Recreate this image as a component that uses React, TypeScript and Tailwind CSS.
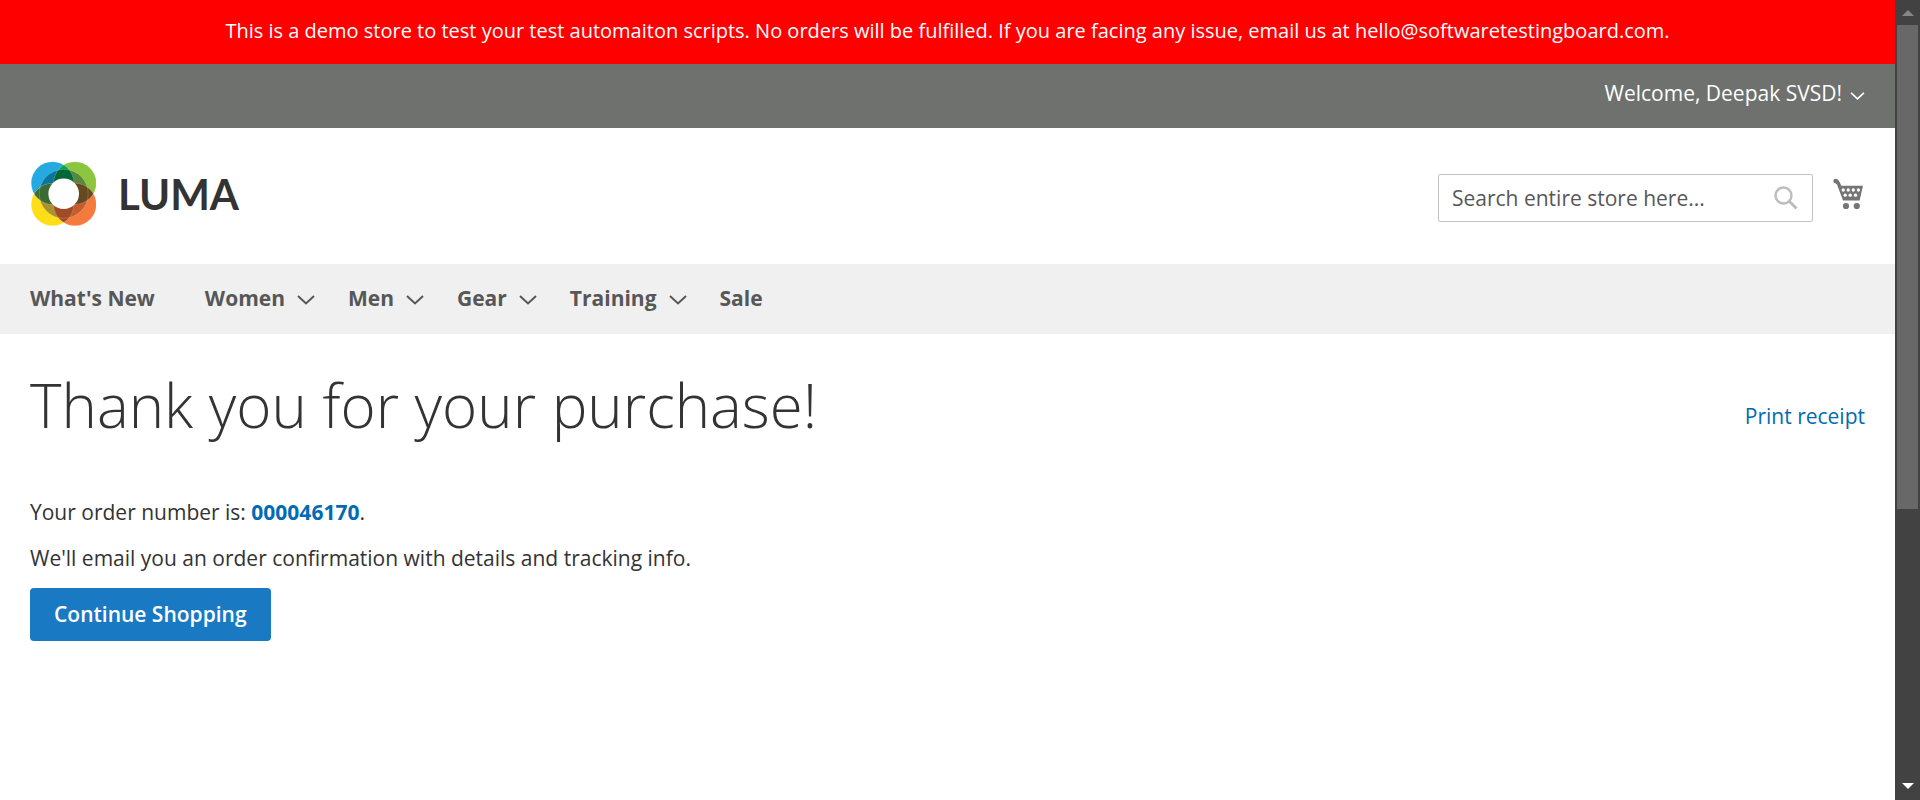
import { useId } from "react";

const navItems = [
  { label: "What's New", menu: false },
  { label: "Women", menu: true },
  { label: "Men", menu: true },
  { label: "Gear", menu: true },
  { label: "Training", menu: true },
  { label: "Sale", menu: false },
];

function Chevron({ className }: { className: string }) {
  return (
    <svg viewBox="0 0 18 10" className={className} fill="none" stroke="currentColor" strokeWidth="2" aria-hidden="true">
      <path d="M1 1 L9 8.5 L17 1" />
    </svg>
  );
}

function LogoMark() {
  const id = useId();
  return (
    <svg viewBox="0 0 66 66" className="size-[66px]" aria-hidden="true">
      <defs>
        <clipPath id={id + "b"}><circle cx="22.5" cy="22" r="21.3" /></clipPath>
        <clipPath id={id + "g"}><circle cx="45" cy="22" r="21.3" /></clipPath>
        <clipPath id={id + "y"}><circle cx="22.5" cy="43.5" r="21.3" /></clipPath>
        <clipPath id={id + "o"}><circle cx="45" cy="43.5" r="21.3" /></clipPath>
      </defs>
      <circle cx="22.5" cy="22" r="21.3" fill="#26a9e0" />
      <circle cx="45" cy="22" r="21.3" fill="#8cc63f" />
      <circle cx="22.5" cy="43.5" r="21.3" fill="#ffde17" />
      <circle cx="45" cy="43.5" r="21.3" fill="#f47b3d" />
      <circle cx="33.7" cy="32.8" r="24.5" fill="#0b75a0" clipPath={`url(#${id}b)`} />
      <circle cx="33.7" cy="32.8" r="24.5" fill="#59873e" clipPath={`url(#${id}g)`} />
      <circle cx="33.7" cy="32.8" r="24.5" fill="#a8932f" clipPath={`url(#${id}y)`} />
      <circle cx="33.7" cy="32.8" r="24.5" fill="#c45c2e" clipPath={`url(#${id}o)`} />
      <g clipPath={`url(#${id}b)`}>
        <circle cx="22.5" cy="43.5" r="21.3" fill="#3a6b34" />
        <circle cx="45" cy="22" r="21.3" fill="#00a551" />
        <g clipPath={`url(#${id}g)`}><circle cx="33.7" cy="32.8" r="24.5" fill="#006837" /></g>
      </g>
      <g clipPath={`url(#${id}o)`}>
        <circle cx="45" cy="22" r="21.3" fill="#664a1f" />
        <circle cx="22.5" cy="43.5" r="21.3" fill="#a24a24" />
      </g>
      <g fill="none" stroke="#fff" strokeOpacity="0.3" strokeWidth="0.6">
        <circle cx="33.7" cy="32.8" r="24.5" />
        <circle cx="22.5" cy="22" r="21.3" />
        <circle cx="45" cy="22" r="21.3" />
        <circle cx="22.5" cy="43.5" r="21.3" />
        <circle cx="45" cy="43.5" r="21.3" />
      </g>
      <circle cx="33.7" cy="32.8" r="15.3" fill="#fff" />
    </svg>
  );
}

function CartIcon() {
  return (
    <svg viewBox="0 0 30 32" className="h-8 w-[30px]" aria-hidden="true">
      <circle cx="2.6" cy="3" r="2.3" fill="#757575" />
      <path d="M2.5 1.2 C5 1 6.2 2.5 7 4.8 L8.2 7.7 H30 L27.3 19.6 L26.7 22.4 H10 L8.9 19.6 L4 6.5 L2 4.8Z" fill="#757575" />
      <g fill="#fff">
        <circle cx="10.2" cy="12" r="1.65" />
        <circle cx="15.2" cy="12" r="1.65" />
        <circle cx="20.3" cy="12" r="1.65" />
        <circle cx="25.4" cy="12" r="1.65" />
        <circle cx="12.2" cy="17.2" r="1.65" />
        <circle cx="17.2" cy="17.2" r="1.65" />
        <circle cx="22.5" cy="17.2" r="1.65" />
      </g>
      <circle cx="13" cy="28" r="3.1" fill="#757575" />
      <circle cx="23.8" cy="28" r="3.1" fill="#757575" />
    </svg>
  );
}

function ScrollRail() {
  return (
    <div className="flex w-[25px] shrink-0 flex-col bg-[#424242]" aria-hidden="true">
      <div className="flex h-[25px] items-center justify-center">
        <svg viewBox="0 0 12 6" className="h-1.5 w-3"><path d="M0 6 L6 0 L12 6Z" fill="#868686" /></svg>
      </div>
      <div className="flex grow flex-col">
        <div className="mx-0.5 basis-[64.5%] bg-[#686868]" />
      </div>
      <div className="flex h-[25px] items-start justify-center pt-2">
        <svg viewBox="0 0 12 6" className="h-1.5 w-3"><path d="M0 0 L6 6 L12 0Z" fill="#fff" /></svg>
      </div>
    </div>
  );
}

export default function App() {
  return (
    <div className="flex min-h-screen bg-white font-['Open_Sans','Noto_Sans',sans-serif] text-[21px] leading-[30px] text-[#333333]">
      <div className="flex min-w-0 grow flex-col">
        <p className="bg-[#ff0000] px-8 pt-[15px] pb-[17px] text-center text-[20px] leading-8 text-white">
          This is a demo store to test your test automaiton scripts. No orders will be fulfilled. If you are facing any issue, email us at hello@softwaretestingboard.com.
        </p>
        <header>
          <div className="flex justify-end bg-[#6e716e] px-[30px] pt-3.5 pb-5 text-white">
            <button type="button" className="flex items-center gap-2">
              Welcome, Deepak SVSD!
              <Chevron className="mt-1.5 h-2 w-[15px]" />
            </button>
          </div>
          <div className="flex items-center justify-between px-[30px] pt-[33px] pb-[37px]">
            <a href="#home" aria-label="Luma home" className="flex items-center gap-[22px]">
              <LogoMark />
              <span className="font-['Lato',sans-serif] text-[42px] leading-[48px] font-bold">LUMA</span>
            </a>
            <div className="flex items-center gap-5 pt-2">
              <form role="search" className="flex h-12 w-[375px] items-center rounded-[2px] border border-[#c2c2c2] pr-[14px] pl-[13px]">
                <input
                  type="search"
                  aria-label="Search entire store"
                  placeholder="Search entire store here..."
                  className="min-w-0 grow bg-transparent outline-none placeholder:text-[#575757] placeholder:opacity-100"
                />
                <button type="submit" aria-label="Search">
                  <svg viewBox="0 0 24 24" className="size-6" fill="none" stroke="#bdbdbd" aria-hidden="true">
                    <circle cx="9.5" cy="9.5" r="8" strokeWidth="2.4" />
                    <path d="M15 15 L22.5 22.5" strokeWidth="3" />
                  </svg>
                </button>
              </form>
              <a href="#cart" aria-label="My cart" className="mr-0.5 pb-2"><CartIcon /></a>
            </div>
          </div>
        </header>
        <nav className="bg-[#f0f0f0] px-[30px] pt-[19px] pb-[21px] font-bold text-[#575757]">
          <ul className="flex items-center">
            {navItems.map(({ label, menu }) => (
              <li key={label} className={menu ? "pr-[33px]" : "pr-[50px]"}>
                <a href={"#" + label.toLowerCase()} className="flex items-center gap-3">
                  {label}
                  {menu && <Chevron className="mt-1 h-2.5 w-[18px]" />}
                </a>
              </li>
            ))}
          </ul>
        </nav>
        <main className="px-[30px] pt-[38px]">
          <div className="flex items-start justify-between">
            <h1 className="text-[60px] leading-[66px] font-light">Thank you for your purchase!</h1>
            <a href="#print" className="mt-[29px] text-[#006bb4]">Print receipt</a>
          </div>
          <p className="mt-[59px]">
            Your order number is: <a href="#order" className="font-bold text-[#006bb4]">000046170</a>.
          </p>
          <p className="mt-4">We'll email you an order confirmation with details and tracking info.</p>
          <a href="#shop" className="mt-[15px] inline-block rounded-[4px] bg-[#1979c3] px-6 pt-[11px] pb-3 font-semibold text-white">
            Continue Shopping
          </a>
        </main>
      </div>
      <ScrollRail />
    </div>
  );
}
